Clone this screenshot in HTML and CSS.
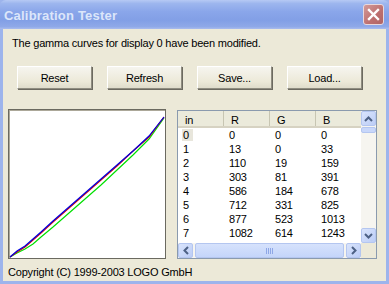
FILE: index.html
```html
<!DOCTYPE html>
<html lang="en">
<head>
    <meta charset="UTF-8">
    <title>Calibration Tester</title>
    <link rel="stylesheet" href="styles.css">
</head>
<body>
    <div class="window">
        <div class="titlebar">
            <div class="title">Calibration Tester</div>
            <div class="close">
                <svg width="13" height="13" viewBox="0 0 13 13"><path d="M2 2 L11 11 M11 2 L2 11" stroke="#fff" stroke-width="2.4" stroke-linecap="square"/></svg>
            </div>
        </div>
        <div class="client">
            <div class="message">The gamma curves for display 0 have been modified.</div>
            <div class="buttons">
                <div class="btn">Reset</div>
                <div class="btn">Refresh</div>
                <div class="btn">Save...</div>
                <div class="btn">Load...</div>
            </div>
            <div class="main">
                <div class="graph">
                    <svg width="156" height="148" viewBox="0 0 156 148">
                        <polyline fill="none" stroke="#00e000" stroke-width="1.2" points="1,147 8,143 16,139 24,134 32,127 44,117 60,103 76,89 92,75 108,60 124,45 140,29 155,8"/>
                        <polyline fill="none" stroke="#e00000" stroke-width="1.2" points="1,147 8,142 16,137 24,130 32,123 44,112 60,98 76,84 92,70 108,56 124,41 140,27 155,7"/>
                        <polyline fill="none" stroke="#0000e0" stroke-width="1.2" points="1,147 8,141 16,136 24,129 32,122 44,111 60,97 76,83 92,69 108,55 124,41 140,26 155,7"/>
                    </svg>
                </div>
                <div class="listview">
                    <div class="lv-content">
                        <div class="lv-head">
                            <div class="hcell">in</div>
                            <div class="hcell">R</div>
                            <div class="hcell">G</div>
                            <div class="hcell">B</div>
                        </div>
                        <div class="lv-row"><div class="cell"><span class="sel">0</span></div><div class="cell">0</div><div class="cell">0</div><div class="cell">0</div></div>
                        <div class="lv-row"><div class="cell">1</div><div class="cell">13</div><div class="cell">0</div><div class="cell">33</div></div>
                        <div class="lv-row"><div class="cell">2</div><div class="cell">110</div><div class="cell">19</div><div class="cell">159</div></div>
                        <div class="lv-row"><div class="cell">3</div><div class="cell">303</div><div class="cell">81</div><div class="cell">391</div></div>
                        <div class="lv-row"><div class="cell">4</div><div class="cell">586</div><div class="cell">184</div><div class="cell">678</div></div>
                        <div class="lv-row"><div class="cell">5</div><div class="cell">712</div><div class="cell">331</div><div class="cell">825</div></div>
                        <div class="lv-row"><div class="cell">6</div><div class="cell">877</div><div class="cell">523</div><div class="cell">1013</div></div>
                        <div class="lv-row"><div class="cell">7</div><div class="cell">1082</div><div class="cell">614</div><div class="cell">1243</div></div>
                    </div>
                    <div class="vscroll">
                        <div class="sbtn">
                            <svg width="9" height="6" viewBox="0 0 9 6"><polyline points="1,5 4.5,1.5 8,5" fill="none" stroke="#4d6185" stroke-width="2"/></svg>
                        </div>
                        <div class="vthumb"></div>
                        <div class="vtrack"></div>
                        <div class="sbtn">
                            <svg width="9" height="6" viewBox="0 0 9 6"><polyline points="1,1 4.5,4.5 8,1" fill="none" stroke="#4d6185" stroke-width="2"/></svg>
                        </div>
                    </div>
                    <div class="hscroll">
                        <div class="sbtn">
                            <svg width="6" height="9" viewBox="0 0 6 9"><polyline points="5,1 1.5,4.5 5,8" fill="none" stroke="#4d6185" stroke-width="2"/></svg>
                        </div>
                        <div class="hthumb"><span class="grip"></span></div>
                        <div class="sbtn">
                            <svg width="6" height="9" viewBox="0 0 6 9"><polyline points="1,1 4.5,4.5 1,8" fill="none" stroke="#4d6185" stroke-width="2"/></svg>
                        </div>
                    </div>
                    <div class="corner"></div>
                </div>
            </div>
            <div class="copyright">Copyright (C) 1999-2003 LOGO GmbH</div>
        </div>
    </div>
</body>
</html>
```

FILE: styles.css
```css
*{
    box-sizing: border-box;
}
body{
    margin: 0;
    font-family: "Liberation Sans", Arial, sans-serif;
    font-size: 11px;
    letter-spacing: -0.2px;
    color: #000;
}
.window{
    width: 389px;
    height: 284px;
    display: flex;
    flex-direction: column;
    background: #9db4ec;
    padding: 0 3px 3px 3px;
}
.titlebar{
    height: 29px;
    margin: 0 -3px;
    display: flex;
    align-items: center;
    justify-content: space-between;
    padding: 0 5px 0 4px;
    border-radius: 6px 6px 0 0;
    background: linear-gradient(#b6c9f4 0%, #9db6ee 12%, #8aa6ea 40%, #829fe6 70%, #8fa9e8 92%, #aabcee 100%);
}
.title{
    font-weight: bold;
    font-size: 13px;
    letter-spacing: 0.2px;
    color: #dce6fa;
    margin-top: 1px;
}
.close{
    width: 21px;
    height: 21px;
    border: 1px solid #e8d8dc;
    border-radius: 3px;
    background: linear-gradient(135deg, #d39a98, #bd6f6f 60%, #b06464);
    display: flex;
    align-items: center;
    justify-content: center;
}
.client{
    flex: 1;
    background: #ece9d8;
    padding: 0 0 0 5px;
}
.message{
    margin: 8px 0 0 4px;
    line-height: 13px;
}
.buttons{
    display: flex;
    gap: 15px;
    margin: 16px 0 0 9px;
}
.btn{
    width: 75px;
    height: 23px;
    display: flex;
    align-items: center;
    justify-content: center;
    background: linear-gradient(#f6f5ef, #ece9d8 70%, #dfdccb);
    border: 1px solid;
    border-color: #ffffff #8f8d80 #8f8d80 #ffffff;
    box-shadow: 1px 1px 0 #6c6a60;
}
.main{
    display: flex;
    gap: 11px;
    margin-top: 20px;
}
.graph{
    width: 158px;
    height: 150px;
    background: #fff;
    border: 1px solid #6b6a60;
    box-shadow: inset 1px 1px 0 #aca899;
}
.graph svg{
    display: block;
}
.listview{
    width: 200px;
    height: 149px;
    margin-top: 1px;
    border: 1px solid #8a9aae;
    background: #fff;
    display: grid;
    grid-template-columns: 1fr 15px;
    grid-template-rows: 1fr 15px;
}
.lv-content{
    overflow: hidden;
}
.lv-head, .lv-row{
    display: grid;
    grid-template-columns: 46px 46px 46px 46px;
}
.lv-head{
    height: 17px;
    background: #ebeadb;
    border-bottom: 2px solid #d6d2c2;
}
.hcell{
    padding: 3px 0 0 7px;
    line-height: 12px;
    border-right: 1px solid #c7c5b2;
    margin-bottom: 1px;
}
.lv-row{
    height: 14px;
    line-height: 14px;
}
.cell{
    padding-left: 5px;
}
.sel{
    background: #e8e6dc;
    padding: 0 4px 0 1px;
    margin-left: -1px;
}
.vscroll{
    display: flex;
    flex-direction: column;
    background: #f6f5f0;
}
.hscroll{
    display: flex;
    background: #f6f5f0;
}
.sbtn{
    width: 15px;
    height: 15px;
    flex: none;
    border: 1px solid #b4c6f0;
    border-radius: 2px;
    background: linear-gradient(135deg, #d9e4fc, #bccdf6);
    display: flex;
    align-items: center;
    justify-content: center;
}
.vthumb{
    height: 6px;
    margin: 1px 0;
    border: 1px solid #b4c6f0;
    border-radius: 2px;
    background: #c8d7fa;
}
.vtrack{
    flex: 1;
}
.hthumb{
    flex: 1;
    margin: 0 2px;
    border: 1px solid #b4c6f0;
    border-radius: 2px;
    background: linear-gradient(#d6e2fc, #c4d5fa);
    display: flex;
    align-items: center;
    justify-content: center;
}
.grip{
    width: 8px;
    height: 6px;
    background: repeating-linear-gradient(90deg, #8ea7e6 0 1px, transparent 1px 2px);
}
.corner{
    background: #ece9d8;
}
.copyright{
    margin: 7px 0 0 0;
    line-height: 13px;
}
```
